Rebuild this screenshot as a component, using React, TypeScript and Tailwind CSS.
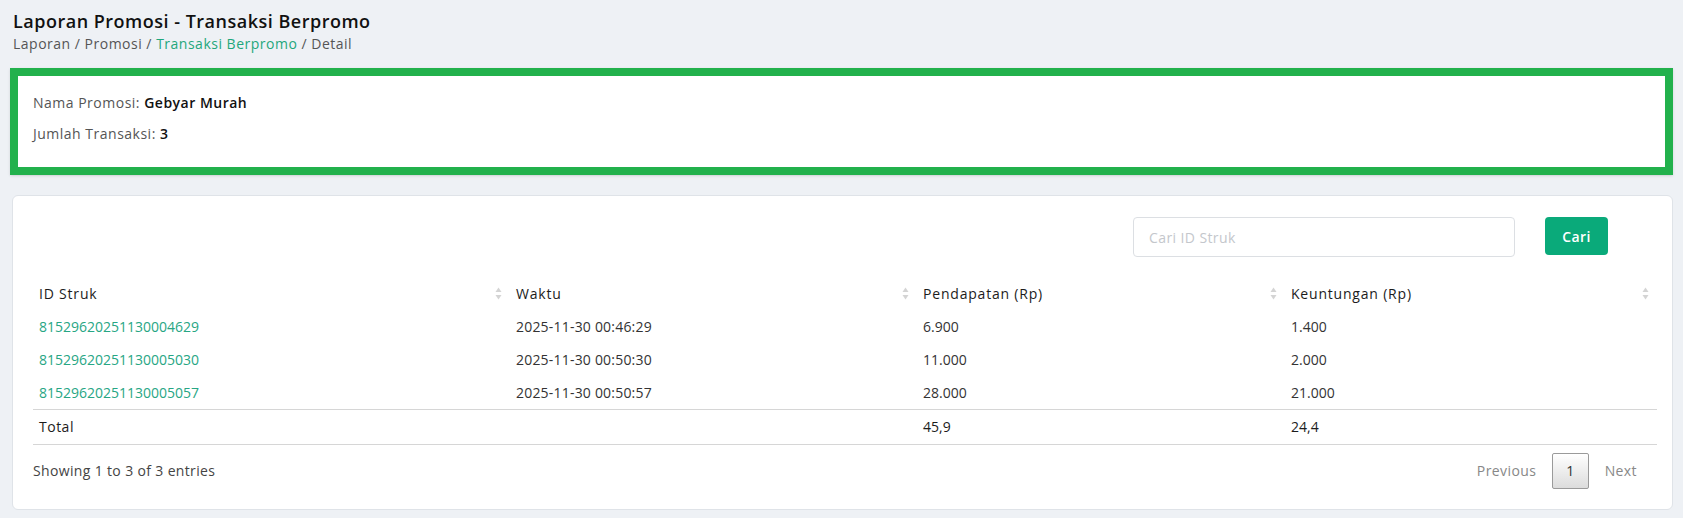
import React from "react";

const rows = [
  { id: "81529620251130004629", waktu: "2025-11-30 00:46:29", pend: "6.900", untung: "1.400" },
  { id: "81529620251130005030", waktu: "2025-11-30 00:50:30", pend: "11.000", untung: "2.000" },
  { id: "81529620251130005057", waktu: "2025-11-30 00:50:57", pend: "28.000", untung: "21.000" },
];

function SortIcon() {
  return (
    <svg width="7" height="13" viewBox="0 0 7 13" className="shrink-0">
      <path d="M3.5 0.5 L6.5 5 L0.5 5 Z" fill="#d4d4d4" />
      <path d="M3.5 12.5 L6.5 8 L0.5 8 Z" fill="#d4d4d4" />
    </svg>
  );
}

function Th({ label, w }: { label: string; w: string }) {
  return (
    <th className={`${w} h-[33px] p-0 font-normal text-left`}>
      <div className="flex items-center justify-between pl-[6px] pr-[8px] text-[#1c1c1c] tracking-[0.8px]">
        <span>{label}</span>
        <SortIcon />
      </div>
    </th>
  );
}

export default function App() {
  return (
    <div
      className="min-h-[518px] bg-[#eef1f5] px-[10px] pt-[9px] text-[14px]"
      style={{ fontFamily: '"Open Sans", "Noto Sans", sans-serif' }}
    >
      <h1 className="text-[18px] leading-[25px] font-semibold text-[#111] pl-[3px] tracking-[0.5px]">
        Laporan Promosi - Transaksi Berpromo
      </h1>
      <div className="leading-[20px] text-[#555] pl-[3px] tracking-[0.5px]">
        Laporan / Promosi / <span className="text-[#1fa77c]">Transaksi Berpromo</span> / Detail
      </div>

      <div className="mt-[14px] border-8 border-[#22b14c] bg-white shadow-sm pl-[15px] pt-[17px] pb-[23px] flex flex-col gap-[11px] leading-[20px] tracking-[0.5px]">
        <div className="text-[#555]">
          Nama Promosi: <span className="font-semibold text-[#111]">Gebyar Murah</span>
        </div>
        <div className="text-[#555]">
          Jumlah Transaksi: <span className="font-semibold text-[#111]">3</span>
        </div>
      </div>

      <div className="ml-[2px] mt-[20px] rounded-[6px] border border-[#dfe3e8] bg-white pl-[20px] pr-[15px] pt-[21px] pb-[20px]">
        <div className="flex justify-end items-start gap-[30px] pr-[49px]">
          <input
            placeholder="Cari ID Struk"
            className="w-[382px] h-[40px] rounded-[4px] border border-[#dcdfe3] px-[15px] text-[14px] tracking-[0.4px] placeholder:text-[#c4c7cc] outline-none"
          />
          <button className="w-[63px] h-[38px] rounded-[4px] bg-[#0aaa7a] text-white font-semibold text-[14px] tracking-[0.4px]">
            Cari
          </button>
        </div>

        <table className="mt-[20px] w-full border-collapse table-fixed">
          <thead>
            <tr>
              <Th label="ID Struk" w="w-[477px]" />
              <Th label="Waktu" w="w-[407px]" />
              <Th label="Pendapatan (Rp)" w="w-[368px]" />
              <Th label="Keuntungan (Rp)" w="" />
            </tr>
          </thead>
          <tbody>
            {rows.map((r) => (
              <tr key={r.id} className="h-[33px] text-[#333]">
                <td className="pl-[6px] text-[#27a684]">{r.id}</td>
                <td className="pl-[6px] tracking-[0.2px]">{r.waktu}</td>
                <td className="pl-[6px]">{r.pend}</td>
                <td className="pl-[6px]">{r.untung}</td>
              </tr>
            ))}
          </tbody>
          <tfoot>
            <tr className="h-[35px] border-t border-b border-[#d6d6d6] text-[#1c1c1c]">
              <td className="pl-[6px] tracking-[0.5px]">Total</td>
              <td></td>
              <td className="pl-[6px]">45,9</td>
              <td className="pl-[6px]">24,4</td>
            </tr>
          </tfoot>
        </table>

        <div className="mt-[8px] flex items-center justify-between">
          <div className="text-[#444] leading-[20px] tracking-[0.35px]">Showing 1 to 3 of 3 entries</div>
          <div className="flex items-center pr-[6px] leading-[20px] tracking-[0.4px]">
            <span className="px-[14px] py-[8px] text-[#888]">Previous</span>
            <span className="ml-[2px] px-[13px] py-[7px] border border-[#9a9a9a] rounded-[2px] bg-gradient-to-b from-white to-[#dcdcdc] text-[#333]">
              1
            </span>
            <span className="ml-[2px] px-[14px] py-[8px] text-[#888]">Next</span>
          </div>
        </div>
      </div>
    </div>
  );
}
